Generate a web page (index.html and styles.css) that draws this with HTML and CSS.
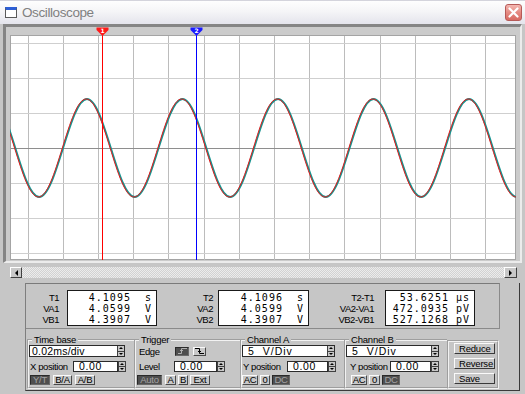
FILE: index.html
```html
<!DOCTYPE html>
<html>
<head>
<meta charset="utf-8">
<title>Oscilloscope</title>
<link rel="stylesheet" href="styles.css">
</head>
<body>
<div class="window">
  <div class="titlebar">
    <span class="app-icon"></span>
    <span class="title">Oscilloscope</span>
    <span class="close"><svg width="11" height="11" viewBox="0 0 11 11"><path d="M1.5 1.5L9.5 9.5M9.5 1.5L1.5 9.5" stroke="#fff" stroke-width="2.2" stroke-linecap="round"/></svg></span>
  </div>

  <div class="screen">
    <svg class="scope" width="506" height="233" viewBox="0 0 506 233">
      <defs>
        <path id="wave" fill="none" d="M-42.4 112c7.79-25.1 15.24-49 23.88-49c8.64 0 16.09 23.9 23.88 49c7.79 25.1 15.24 49 23.88 49c8.64 0 16.09-23.9 23.88-49c7.79-25.1 15.24-49 23.88-49c8.64 0 16.09 23.9 23.88 49c7.79 25.1 15.24 49 23.88 49c8.64 0 16.09-23.9 23.88-49c7.79-25.1 15.24-49 23.88-49c8.64 0 16.09 23.9 23.88 49c7.79 25.1 15.24 49 23.88 49c8.64 0 16.09-23.9 23.88-49c7.79-25.1 15.24-49 23.88-49c8.64 0 16.09 23.9 23.88 49c7.79 25.1 15.24 49 23.88 49c8.64 0 16.09-23.9 23.88-49c7.79-25.1 15.24-49 23.88-49c8.64 0 16.09 23.9 23.88 49c7.79 25.1 15.24 49 23.88 49c8.64 0 16.09-23.9 23.88-49c7.79-25.1 15.24-49 23.88-49c8.64 0 16.09 23.9 23.88 49c7.79 25.1 15.24 49 23.88 49c8.64 0 16.09-23.9 23.88-49"/>
      </defs>
      <rect x="0.5" y="8.5" width="505" height="224" fill="#fff" stroke="#a4a4a4"/>
      <g transform="translate(0,9)">
        <path stroke="#bcbcbc" stroke-width="1" d="M18.5 0V224M53.5 0V224M88.5 0V224M123.5 0V224M158.5 0V224M194.5 0V224M229.5 0V224M264.5 0V224M299.5 0V224M334.5 0V224M370.5 0V224M405.5 0V224M440.5 0V224M475.5 0V224"/>
        <path stroke="#cfcfcf" stroke-width="1" d="M1 7.5H505M1 42.5H505M1 77.5H505M1 147.5H505M1 182.5H505M1 217.5H505"/>
        <path stroke="#8e8e8e" stroke-width="1" d="M1 112.5H505"/>
        <use href="#wave" stroke="#17938f" stroke-width="1.8" stroke-linejoin="round"/>
        <use href="#wave" x="-0.8" stroke="#e61a1a" stroke-width="1" stroke-linejoin="round"/>
      </g>
      <path d="M92.5 7V233" stroke="#ff0000" stroke-width="1"/>
      <path d="M186.5 7V233" stroke="#0000ff" stroke-width="1"/>
      <polygon points="86.5,0.5 98.5,0.5 98.5,3 92.5,9 86.5,3" fill="#ff1a1a"/>
      <text x="92.5" y="6" class="mk">1</text>
      <polygon points="180.5,0.5 192.5,0.5 192.5,3 186.5,9 180.5,3" fill="#1a1aff"/>
      <text x="186.5" y="6" class="mk">2</text>
    </svg>
  </div>

  <div class="scroll">
    <span class="sbtn sl"><span class="tri-l"></span></span>
    <span class="track"></span>
    <span class="sbtn sr"><span class="tri-r"></span></span>
  </div>

  <div class="lower">
    <div class="readouts">
      <div class="rlabels w1"><div>T1</div><div>VA1</div><div>VB1</div></div>
      <div class="rbox b1"><div>4.1095  s</div><div>4.0599  V</div><div>4.3907  V</div></div>
      <div class="rlabels w2"><div>T2</div><div>VA2</div><div>VB2</div></div>
      <div class="rbox b2"><div>4.1096  s</div><div>4.0599  V</div><div>4.3907  V</div></div>
      <div class="rlabels w3"><div>T2-T1</div><div>VA2-VA1</div><div>VB2-VB1</div></div>
      <div class="rbox b3"><div>53.6251 µs</div><div>472.0935 pV</div><div>527.1268 pV</div></div>
    </div>

    <div class="controls">
      <fieldset class="grp g-time">
        <legend>Time base</legend>
        <div class="row r1">
          <div class="select s-time"><span class="val">0.02ms/div</span><span class="spin"><i></i><i class="dn"></i></span></div>
        </div>
        <div class="row r2">
          <span class="lbl l-xpos">X position</span>
          <span class="field f-time"><span class="val">0.00</span></span>
          <span class="spin sp-ext"><i></i><i class="dn"></i></span>
        </div>
        <div class="row r3">
          <span class="btn on b-yt">Y/T</span>
          <span class="btn b-ba">B/A</span>
          <span class="btn b-ab">A/B</span>
        </div>
      </fieldset>

      <fieldset class="grp g-trig">
        <legend>Trigger</legend>
        <div class="row r1">
          <span class="lbl l-edge">Edge</span>
          <span class="btn on e-rise"><svg width="9" height="6" viewBox="0 0 9 6"><path d="M0 5.5H3.5V0.5H9" fill="none" stroke="#b0b0b0"/><path d="M2 3L3.5 1.5L5 3" fill="none" stroke="#b0b0b0"/></svg></span>
          <span class="btn e-fall"><svg width="9" height="6" viewBox="0 0 9 6"><path d="M0 0.5H4.5V5.5H9" fill="none" stroke="#000"/><path d="M3 3L4.5 4.5L6 3" fill="none" stroke="#000"/></svg></span>
        </div>
        <div class="row r2">
          <span class="lbl l-level">Level</span>
          <span class="field f-level"><span class="val">0.00</span></span>
          <span class="spin sp-ext"><i></i><i class="dn"></i></span>
        </div>
        <div class="row r3">
          <span class="btn on b-auto">Auto</span>
          <span class="btn b-a">A</span>
          <span class="btn b-b">B</span>
          <span class="btn b-ext">Ext</span>
        </div>
      </fieldset>

      <fieldset class="grp g-cha">
        <legend>Channel A</legend>
        <div class="row r1">
          <div class="select s-ch"><span class="val vdiv">5 V/Div</span><span class="spin"><i></i><i class="dn"></i></span></div>
        </div>
        <div class="row r2">
          <span class="lbl l-ya">Y position</span>
          <span class="field f-ch"><span class="val">0.00</span></span>
          <span class="spin sp-ext"><i></i><i class="dn"></i></span>
        </div>
        <div class="row r3">
          <span class="btn b-ac">AC</span>
          <span class="btn b-0">0</span>
          <span class="btn on b-dc">DC</span>
        </div>
      </fieldset>

      <fieldset class="grp g-chb">
        <legend>Channel B</legend>
        <div class="row r1">
          <div class="select s-ch"><span class="val vdiv">5 V/Div</span><span class="spin"><i></i><i class="dn"></i></span></div>
        </div>
        <div class="row r2">
          <span class="lbl l-yb">Y position</span>
          <span class="field f-chb"><span class="val">0.00</span></span>
          <span class="spin sp-ext"><i></i><i class="dn"></i></span>
        </div>
        <div class="row r3 r3b">
          <span class="btn b-ac">AC</span>
          <span class="btn b-0b">0</span>
          <span class="btn on b-dc">DC</span>
        </div>
      </fieldset>

      <fieldset class="grp g-btns">
        <span class="bigbtn">Reduce</span>
        <span class="bigbtn">Reverse</span>
        <span class="bigbtn">Save</span>
      </fieldset>
    </div>
  </div>
</div>
</body>
</html>
```

FILE: styles.css
```css
* { box-sizing: border-box; }
html, body { margin: 0; padding: 0; }
body {
  width: 525px;
  height: 394px;
  overflow: hidden;
  background: #c6c6c6;
  font-family: "Liberation Sans", Arial, sans-serif;
  color: #000;
}
.window {
  width: 525px;
  height: 394px;
  display: flex;
  flex-direction: column;
  background: #c6c6c6;
}

/* title bar */
.titlebar {
  height: 24px;
  flex: none;
  display: flex;
  align-items: center;
  padding-left: 5px;
  background: linear-gradient(#fefefe, #f5f5f7 45%, #e4e4ec);
  border-top: 1px solid #d4d4dc;
}
.app-icon {
  width: 12px;
  height: 11px;
  border: 1px solid #5a5a5a;
  border-top: 3px solid #2d5fd6;
  background: #fff;
}
.title {
  margin-left: 5px;
  font-size: 13.5px;
  letter-spacing: -0.4px;
  color: #808080;
}
.close {
  margin-left: auto;
  margin-right: 3px;
  width: 17px;
  height: 17px;
  border: 1px solid #b65a58;
  border-radius: 3px;
  background: linear-gradient(#f4b8b2, #e58a82 50%, #d86a62);
  display: flex;
  align-items: center;
  justify-content: center;
}

/* scope screen */
.screen {
  flex: none;
  margin-left: 3px;
  width: 519px;
  height: 239px;
  border-style: solid;
  border-width: 3px 2px 2px 3px;
  border-color: #858585 #ececec #ececec #858585;
  padding: 0 4px 1px 4px;
  background: #cbcbcb;
}
.scope { display: block; }
.mk {
  font-family: "DejaVu Sans", sans-serif;
  font-size: 6px;
  font-weight: bold;
  fill: #fff;
  text-anchor: middle;
}

/* scrollbar */
.scroll {
  flex: none;
  display: flex;
  margin: 4px 0 0 10px;
  width: 507px;
  height: 11px;
}
.sbtn {
  flex: none;
  height: 11px;
  background: #c8c8c8;
  border: 1px solid;
  border-color: #fff #404040 #404040 #fff;
  display: flex;
  align-items: center;
  justify-content: center;
}
.sl { width: 12px; }
.sr { width: 13px; }
.tri-l {
  border-top: 3px solid transparent;
  border-bottom: 3px solid transparent;
  border-right: 3px solid #000;
}
.tri-r {
  border-top: 3px solid transparent;
  border-bottom: 3px solid transparent;
  border-left: 3px solid #000;
}
.track {
  flex: 1;
  background: repeating-conic-gradient(#ececec 0 25%, #d2d2d2 0 50%) 0 0 / 2px 2px;
}

/* lower panel */
.lower {
  flex: none;
  margin: 5px 0 0 25px;
  width: 495px;
  height: 108px;
  border-left: 1px solid #7e7e7e;
  border-right: 1px solid #3a3a3a;
  border-bottom: 1px solid #3a3a3a;
}
.readouts {
  width: 474px;
  height: 46px;
  display: flex;
  align-items: flex-start;
  padding-top: 6px;
  border-top: 1px solid #7a7a7a;
  border-right: 1px solid #8a8a8a;
  border-bottom: 1px solid #8a8a8a;
}
.rlabels {
  flex: none;
  text-align: right;
  font-size: 9.5px;
  letter-spacing: -0.5px;
  line-height: 11px;
  padding-top: 2px;
}
.w1 { width: 33px; }
.w2 { width: 56px; }
.w3 { width: 65px; }
.rbox {
  flex: none;
  height: 36px;
  border: 1px solid #1a1a1a;
  background: #fff;
  padding: 1px 4px 0 0;
  font-family: "DejaVu Sans Mono", monospace;
  font-size: 10px;
  letter-spacing: 1px;
  line-height: 11px;
  text-align: right;
  white-space: pre;
}
.b1 { width: 90px; margin-left: 8px; }
.b2 { width: 91px; margin-left: 5px; }
.b3 { width: 90px; margin-left: 11px; }

/* controls */
.controls {
  display: flex;
  padding: 6px 0 0 1px;
}
.grp {
  margin: 0;
  padding: 0;
  min-width: 0;
  height: 54px;
  border: 2px groove #f2f2f2;
  border-right: none;
  font-size: 9px;
}
.grp legend {
  font-size: 9.5px;
  line-height: 10px;
  padding: 0 2px;
  margin-left: 3px;
  letter-spacing: -0.2px;
}
.g-time { width: 107px; }
.g-trig { width: 106px; }
.g-cha { width: 104px; }
.g-chb { width: 103px; }
.g-btns {
  width: 52px;
  height: 49px;
  margin-top: 5px;
  border-right: 2px groove #f2f2f2;
  padding: 1px 0 0 5px;
  display: flex;
  flex-direction: column;
  gap: 4px;
}
.row { display: flex; align-items: center; }
.r1 { height: 12px; }
.r2 { height: 11px; margin-top: 4px; }
.r3 { height: 10px; margin-top: 3px; }

.lbl {
  flex: none;
  font-size: 9.5px;
  letter-spacing: -0.4px;
  white-space: nowrap;
}
.l-xpos { width: 44px; padding-left: 1px; }
.l-edge { width: 39px; padding-left: 3px; }
.l-level { width: 38px; padding-left: 3px; }
.l-ya { width: 45px; padding-left: 1px; }
.l-yb { width: 44px; padding-left: 4px; }

.select {
  display: flex;
  height: 12px;
  border: 1px solid #2a2a2a;
  background: #fff;
}
.s-time { width: 96px; }
.s-ch { width: 93px; }
.val {
  flex: 1;
  font-size: 10.5px;
  line-height: 10px;
  padding-left: 2px;
  white-space: nowrap;
  letter-spacing: 0.2px;
}
.vdiv {
  padding-left: 5px;
  font-size: 10.5px;
  letter-spacing: 1px;
  word-spacing: 4px;
}
.field {
  display: flex;
  height: 11px;
  border: 1px solid #2a2a2a;
  background: #fff;
}
.field .val { padding-left: 5px; line-height: 9px; letter-spacing: 0.6px; }
.f-time { width: 45px; }
.f-level { width: 43px; }
.f-ch { width: 41px; }
.f-chb { width: 41px; }

.spin {
  flex: none;
  width: 7px;
  display: flex;
  flex-direction: column;
  background: #c8c8c8;
  border-left: 1px solid #404040;
}
.sp-ext {
  width: 8px;
  height: 11px;
  border: 1px solid #404040;
}
.spin i {
  flex: 1;
  display: flex;
  align-items: center;
  justify-content: center;
  border-bottom: 1px solid #404040;
}
.spin i:last-child { border-bottom: none; }
.spin i::after {
  content: "";
  border-left: 2px solid transparent;
  border-right: 2px solid transparent;
  border-bottom: 2px solid #000;
}
.spin i.dn::after {
  border-bottom: none;
  border-top: 2px solid #000;
}

.btn {
  flex: none;
  height: 10px;
  display: flex;
  align-items: center;
  justify-content: center;
  font-size: 9.5px;
  line-height: 8px;
  letter-spacing: -0.3px;
  background: #c8c8c8;
  border: 1px solid;
  border-color: #fafafa #4a4a4a #4a4a4a #fafafa;
}
.btn.on {
  background: #4e4e4e;
  color: #a4a4a4;
  border-color: #2a2a2a #6a6a6a #6a6a6a #2a2a2a;
}
.b-yt { width: 20px; margin-left: 1px; }
.b-ba { width: 19px; margin-left: 3px; }
.b-ab { width: 20px; margin-left: 3px; }
.e-rise { width: 14px; height: 9px; }
.e-fall { width: 13px; height: 9px; margin-left: 4px; }
.b-auto { width: 25px; margin-left: 1px; }
.b-a { width: 11px; margin-left: 3px; }
.b-b { width: 10px; margin-left: 2px; }
.b-ext { width: 20px; margin-left: 2px; }
.b-ac { width: 16px; }
.b-0 { width: 10px; margin-left: 2px; }
.b-0b { width: 11px; margin-left: 2px; }
.b-dc { width: 18px; margin-left: 2px; }
.r3b { padding-left: 5px; }

.bigbtn {
  flex: none;
  width: 41px;
  height: 11px;
  font-size: 9.5px;
  line-height: 9px;
  letter-spacing: -0.2px;
  padding-left: 4px;
  background: #c8c8c8;
  border: 1px solid;
  border-color: #fafafa #3a3a3a #3a3a3a #fafafa;
}
```
